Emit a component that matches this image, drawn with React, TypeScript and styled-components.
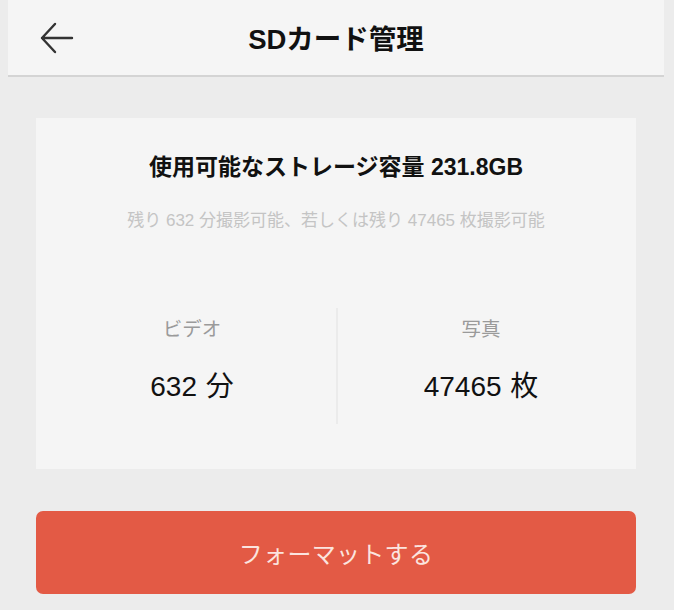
import styled, { createGlobalStyle } from "styled-components";

const GlobalStyle = createGlobalStyle`
    html, body {
        margin: 0;
        padding: 0;
        background: #ececec;
        font-family: "Liberation Sans", "Noto Sans CJK JP", sans-serif;
    }
`;

const stats = [
    { label: "ビデオ", value: "632 分" },
    { label: "写真", value: "47465 枚" },
];

const BackArrow = () => (
    <svg width="34" height="32" viewBox="0 0 34 32" fill="none">
        <path
            d="M32 16H2M15 2L2 16L15 30"
            stroke="#333"
            strokeWidth="2.4"
            strokeLinecap="round"
            strokeLinejoin="round"
        />
    </svg>
);

export default function App() {
    return (
        <>
            <GlobalStyle />
            <Page>
                <Header>
                    <BackButton>
                        <BackArrow />
                    </BackButton>
                    <Title>SDカード管理</Title>
                    <span />
                </Header>
                <Content>
                    <Card>
                        <CardTitle>使用可能なストレージ容量 231.8GB</CardTitle>
                        <Hint>残り 632 分撮影可能、若しくは残り 47465 枚撮影可能</Hint>
                        <Stats>
                            {stats.map((s, i) => (
                                <Stat key={s.label} divided={i > 0}>
                                    <StatLabel>{s.label}</StatLabel>
                                    <StatValue>{s.value}</StatValue>
                                </Stat>
                            ))}
                        </Stats>
                    </Card>
                    <FormatButton>フォーマットする</FormatButton>
                </Content>
            </Page>
        </>
    );
}

const Page = styled.div`
    margin: 0 10px 0 8px;
    min-height: 610px;
`;

const Header = styled.header`
    height: 75px;
    background: #f5f5f5;
    border-bottom: 2px solid #d4d4d4;
    display: grid;
    grid-template-columns: 1fr auto 1fr;
    align-items: center;
    padding: 0 32px;
`;

const BackButton = styled.div`
    display: flex;
    align-items: center;
`;

const Title = styled.h1`
    margin: 0 0 2px;
    font-size: 27.5px;
    font-weight: 700;
    color: #111;
`;

const Content = styled.main`
    padding: 41px 28px 0;
    display: flex;
    flex-direction: column;
    gap: 42px;
`;

const Card = styled.section`
    background: #f5f5f5;
    padding: 34px 12px 45px;
    display: flex;
    flex-direction: column;
    align-items: center;
`;

const CardTitle = styled.h2`
    margin: 0;
    font-size: 23px;
    line-height: 30px;
    font-weight: 700;
    color: #111;
`;

const Hint = styled.p`
    margin: 27px 0 0;
    font-size: 17px;
    line-height: 24px;
    color: #c4c4c4;
`;

const Stats = styled.div`
    margin-top: 75px;
    width: 100%;
    display: grid;
    grid-template-columns: 1fr 1fr;
`;

const Stat = styled.div<{ divided: boolean }>`
    display: flex;
    flex-direction: column;
    align-items: center;
    padding: 9px 0 19px;
    border-left: ${(p) => (p.divided ? "2px solid #ebebeb" : "none")};
`;

const StatLabel = styled.span`
    font-size: 19.5px;
    line-height: 24px;
    color: #9a9a9a;
`;

const StatValue = styled.span`
    margin-top: 28px;
    font-size: 28px;
    line-height: 36px;
    color: #111;
    word-spacing: 1px;
`;

const FormatButton = styled.button`
    height: 83px;
    border: none;
    border-radius: 7px;
    background: #e35a45;
    color: #fbe4df;
    font-family: inherit;
    font-size: 24px;
    letter-spacing: 0.3px;
    cursor: pointer;
`;
